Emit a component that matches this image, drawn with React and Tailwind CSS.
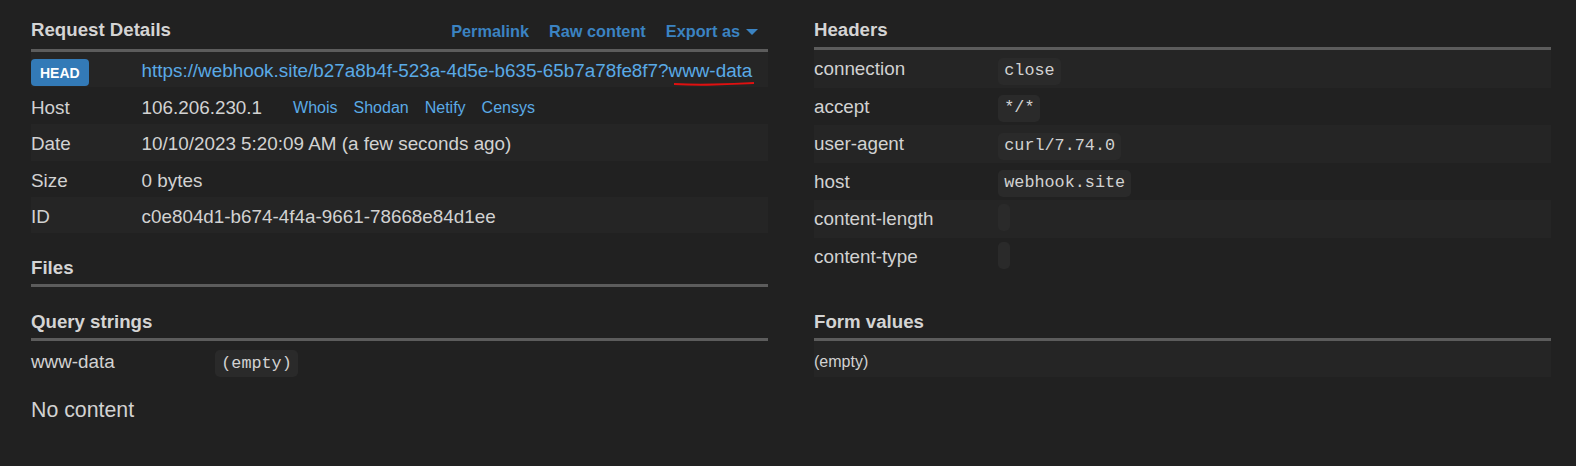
import React from "react";

const font = { fontFamily: '"Liberation Sans", Arial, sans-serif' };

function Code({ children }) {
  return (
    <span className="inline-flex h-[27px] min-w-[12px] items-center rounded-[5px] bg-[#2a2a2a] px-[6px] font-['Liberation_Mono',monospace] text-[16.8px] leading-none text-[#d2d2d2]">
      {children}
    </span>
  );
}

function Heading({ children, h = "h-[47px]", pb = "pb-[5px]" }) {
  return (
    <div className={`flex ${h} items-end justify-between border-b-[3px] border-[#5c5c5c] ${pb}`}>
      <h2 className="text-[18.67px] font-bold leading-[22px] text-[#d4d4d4]">{children}</h2>
    </div>
  );
}

function Row({ label, children, striped, labelW = "w-[25%]", h = "h-[37px]", pt = "pt-[3px]" }) {
  return (
    <div className={`flex ${h} items-center ${pt} ${striped ? "bg-[#252525]" : ""}`}>
      <div className={`${labelW} shrink-0 text-[18.85px] leading-[24px] text-[#d2d2d2]`}>{label}</div>
      <div className="flex min-w-0 flex-1 items-center text-[18.85px] leading-[24px] text-[#d2d2d2]">{children}</div>
    </div>
  );
}

export default function App() {
  const links = ["Whois", "Shodan", "Netify", "Censys"];
  const headers = [
    ["connection", "close"],
    ["accept", "*/*"],
    ["user-agent", "curl/7.74.0"],
    ["host", "webhook.site"],
    ["content-length", ""],
    ["content-type", ""],
  ];
  return (
    <div className="h-[466px] w-[1576px] bg-[#212121]" style={font}>
      <div className="flex gap-[46px] pl-[31px] pr-[25px]">
        {/* Left column */}
        <div className="flex-1">
          <div className="flex h-[52px] items-end justify-between border-b-[3px] border-[#5c5c5c] pb-[8px]">
            <h2 className="text-[18.67px] font-bold leading-[22px] text-[#d4d4d4]">Request Details</h2>
            <div className="mb-[0px] flex items-center gap-[20px] pr-[10px] text-[16.3px] font-bold leading-[20px] text-[#3b83c2]">
              <span>Permalink</span>
              <span>Raw content</span>
              <span className="flex items-center gap-[6px]">
                Export as
                <svg width="12" height="6" viewBox="0 0 12 6" className="mt-[2px]">
                  <path d="M0 0 L12 0 L6 6 Z" fill="#3b83c2" />
                </svg>
              </span>
            </div>
          </div>
          <div className="flex h-[35px] items-center bg-[#252525]">
            <div className="w-[15%] shrink-0 self-end pb-[1px]">
              <span className="inline-flex h-[27px] items-center rounded-[4px] bg-[#337ab7] px-[9px] text-[14px] font-bold leading-none text-white">
                HEAD
              </span>
            </div>
            <div className="pt-[2px] text-[18.85px] leading-[24px] text-[#5aaae6]">
              https://webhook.site/b27a8b4f-523a-4d5e-b635-65b7a78fe8f7?
              <span className="relative">
                www-data
                <svg
                  width="80"
                  height="6"
                  viewBox="0 0 80 6"
                  className="absolute left-[5px] top-[21px]"
                >
                  <path d="M0 3 Q 20 4 40 3.5 T 80 2" stroke="#e01010" strokeWidth="2" fill="none" />
                </svg>
              </span>
            </div>
          </div>
          <Row label="Host" labelW="w-[15%]" pt="pt-[4px]">
            <span>106.206.230.1</span>
            <span className="ml-[31px] flex gap-[16px] text-[16px] text-[#5aaae6]">
              {links.map((l) => (
                <span key={l}>{l}</span>
              ))}
            </span>
          </Row>
          <Row label="Date" labelW="w-[15%]" striped>
            10/10/2023 5:20:09 AM (a few seconds ago)
          </Row>
          <Row label="Size" labelW="w-[15%]" h="h-[36px]">
            0 bytes
          </Row>
          <Row label="ID" labelW="w-[15%]" h="h-[36px]" striped>
            c0e804d1-b674-4f4a-9661-78668e84d1ee
          </Row>

          <Heading h="h-[54px]">Files</Heading>
          <Heading h="h-[54px]">Query strings</Heading>
          <Row label="www-data" pt="pt-[4px]">
            <span className="pt-[4px]">
              <Code>(empty)</Code>
            </span>
          </Row>
          <p className="mt-[17px] text-[21.33px] leading-[30px] text-[#d2d2d2]">No content</p>
        </div>

        {/* Right column */}
        <div className="flex-1">
          <Heading h="h-[50px]" pb="pb-[6px]">Headers</Heading>
          {headers.map(([k, v], i) => (
            <Row key={k} label={k} striped={i % 2 === 0} h="h-[37.5px]" pt="pt-[1px]">
              <span className="pt-[3px]">
                <Code>{v}</Code>
              </span>
            </Row>
          ))}
          <Heading h="h-[66px]">Form values</Heading>
          <div className="flex h-[36px] items-center bg-[#252525] pt-[6px] text-[16px] leading-[20px] text-[#d2d2d2]">(empty)</div>
        </div>
      </div>
    </div>
  );
}
